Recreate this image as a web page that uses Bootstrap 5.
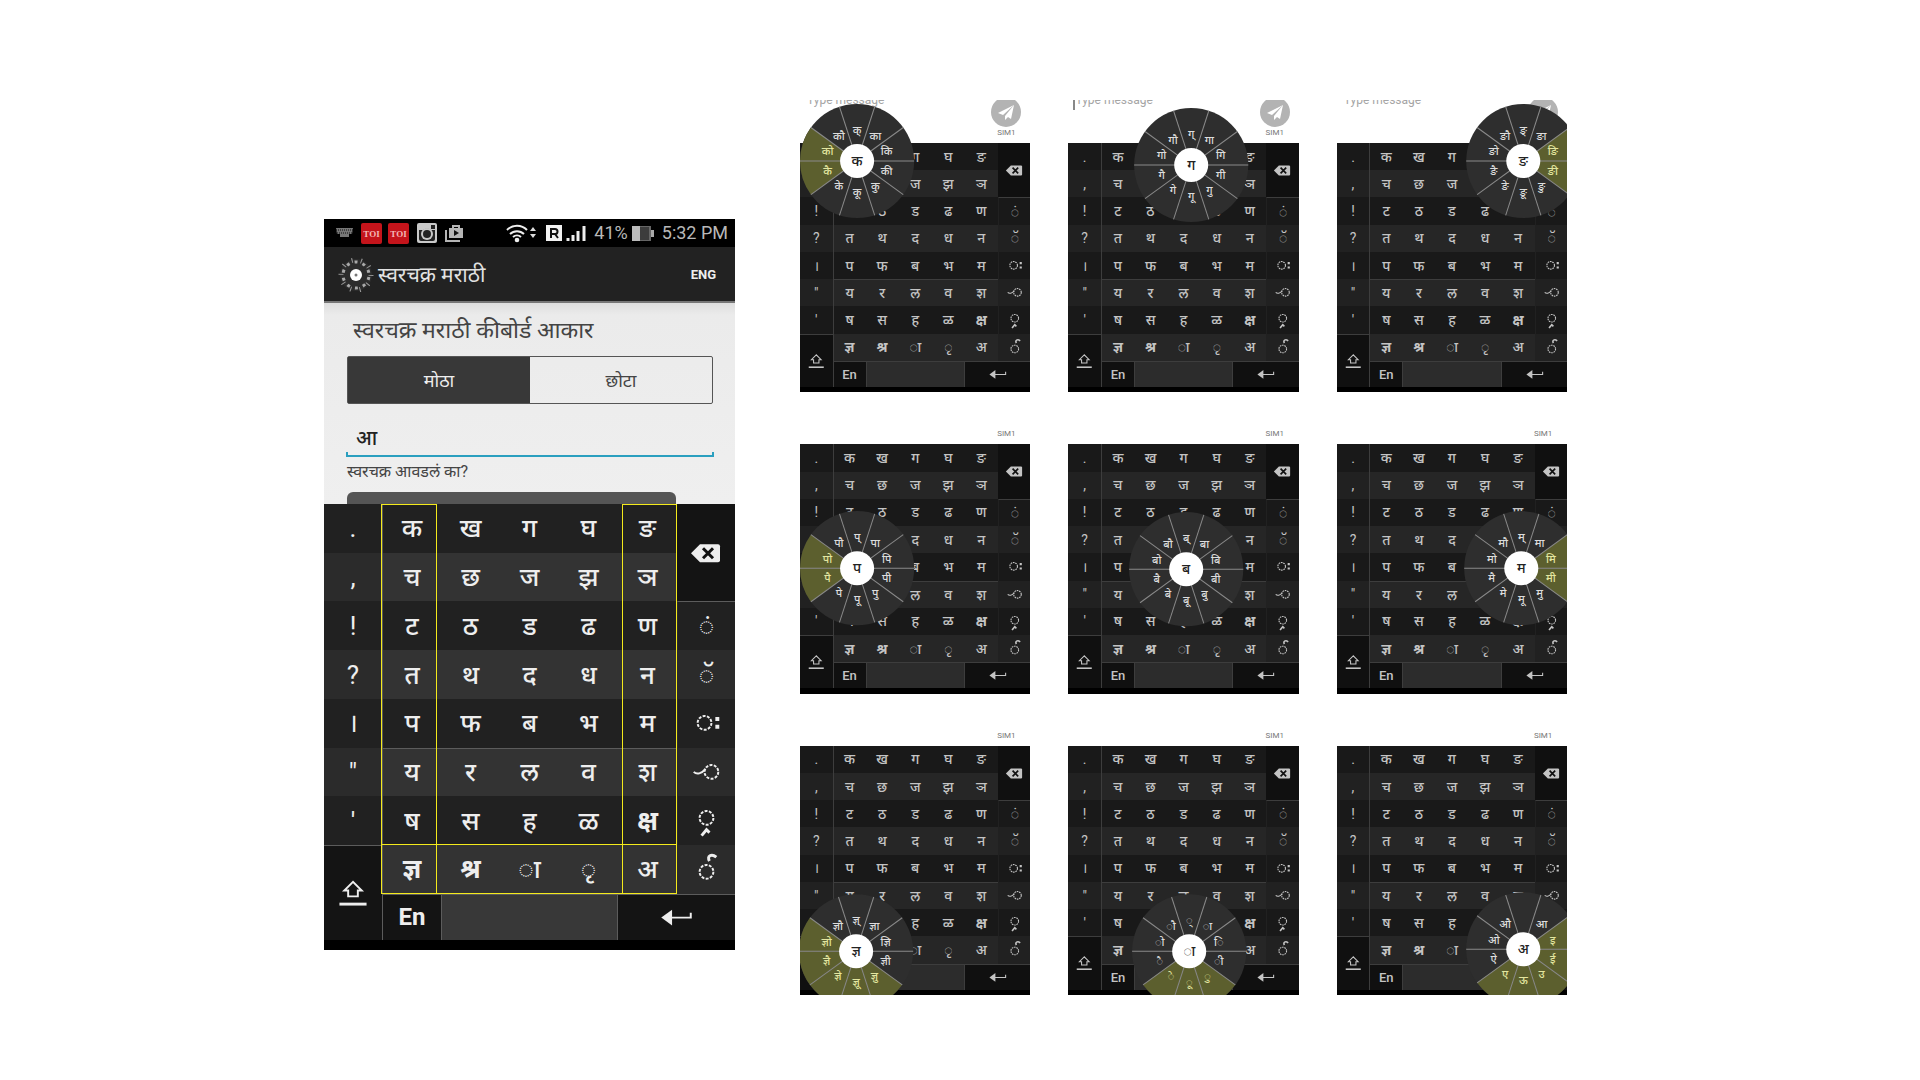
<!DOCTYPE html>
<html lang="mr">
<head>
<meta charset="utf-8">
<meta name="viewport" content="width=device-width, initial-scale=1">
<title>स्वरचक्र मराठी</title>
<link href="https://cdn.jsdelivr.net/npm/bootstrap@5.3.0/dist/css/bootstrap.min.css" rel="stylesheet">
<style>
  body { background: #fff; font-family: Roboto, "Noto Sans", sans-serif; }
  .board { display: grid; grid-template-columns: 411fr 767fr; column-gap: 65px; padding: 100px 18.38% 0 16.875%; align-items: start; }
  .phone { margin-top: 119px; background: #000; }
  .status { height: 28px; padding: 0 7px 0 12px; background: #000; color: #b8b8b8; font-size: 18px; line-height: 28px; }
  .appbar { height: 56px; background: #222; border-bottom: 2px solid #777; padding: 2px 19px 0 14px; color: #e2e2e2; }
  .app-title { font-size: 21px; line-height: 32px; }
  .app-lang { color: #eee; font-size: 13px; font-weight: 700; text-decoration: none; }
  .settings { height: 201px; overflow: hidden; padding: 8px 22px 0 23px; background: linear-gradient(#dedede, #ebebeb 12px, #efefef); }
  .settings h1 { font-size: 23px; line-height: 40px; font-weight: 400; color: #444; margin: 0 0 5px; padding-left: 6px; }
  .sizes { border: 1px solid #555; border-radius: 2px; height: 48px; }
  .sizes .btn { border: 0; border-radius: 0; font-size: 18px; padding: 0; color: #444; }
  .sizes .btn.active { background: #383838; color: #eee; }
  .sample { display: block; width: 100%; margin-top: 17px; height: 32px; border: 0; padding: 0 9px; background: transparent; color: #222; font-size: 20px; font-weight: 500; outline: 0; }
  .sample-line { height: 5px; border: 2px solid #2a9fbf; border-top: 0; margin: -1px -1px 0; }
  .sample-label { display: block; font-size: 16px; line-height: 26px; color: #444; margin: 2px 0 7px; }
  .rate { display: block; width: 90%; height: 30px; border: 0; border-radius: 6px 6px 0 0; background: #555; }

  .keys { position: relative; display: grid; aspect-ratio: 411 / 446; grid-template-columns: 58fr repeat(5, 59fr) 58fr; grid-template-rows: repeat(8, 39fr) 37fr 8fr;
    --dark: #212121; --light: #333; --side: #2b2b2b; --fn: #141414; --space: #383838; --line: #5c5c5c; --ink: #eee; background: #000; font-size: 26px; }
  .keys-sm { aspect-ratio: 230 / 249; --dark: #191919; --light: #262626; --side: #212121; --fn: #101010; --space: #2c2c2c; --line: #3d3d3d; --ink: #c4c4c4; font-size: 14px; }
  .key { display: flex; align-items: center; justify-content: center; min-width: 0; min-height: 0; padding: 0; border: 0; color: var(--ink); background: var(--dark); line-height: 1; font-weight: 500; }
  .key svg { width: 100%; height: 100%; display: block; }
  .key.edge { font-weight: 400; }
  .key.alt { background: var(--light); }
  .key.alt.edge { background: var(--side); }
  .key.fn { background: var(--fn); }
  .key.first { border-left: 1px solid var(--line); }
  .key.last { border-left: 1px solid var(--side); }
  .key.ruled { border-top: 1px solid var(--line); }
  .key.strong { font-weight: 700; }
  .key.space { background: var(--space); border-left: 1px solid var(--line); border-right: 1px solid var(--line); }
  .key.lang { font-weight: 700; font-size: 24px; }
  .keys-sm .key.lang { font-weight: 500; font-size: 13px; }
  .zone { border: 1px solid #f4ea1c; pointer-events: none; }
  .zone-a { grid-area: 1 / 2 / 9 / 3; margin: 0 4px 0 -1px; }
  .zone-b { grid-area: 1 / 6 / 9 / 7; margin-left: 4px; }
  .zone-c { grid-area: 8 / 2 / 9 / 7; margin: -1px 0 0 -1px; }

  .gallery { display: grid; grid-template-columns: repeat(3, 1fr); column-gap: 38px; row-gap: 26px; }
  .shot { overflow: hidden; }
  .shot-head { height: 26px; padding: 6px 9px 0 7px; }
  .shot-head.tall { height: 43px; padding-top: 0; }
  .shot-head input { width: 120px; height: 20px; margin-top: -10px; padding: 0; border: 0; font-size: 12px; line-height: 20px; color: #555; outline: 0; }
  .shot-head input::placeholder { color: #a5a5a5; opacity: 1; }
  .caret input { border-left: 2px solid #888; padding-left: 0; margin-left: -2px; }
  .send { display: block; width: 30px; height: 30px; margin-top: -3px; padding: 0; border: 0; background: none; }
  .send svg { display: block; }
  .sim { font-size: 8px; line-height: 12px; color: #777; width: 30px; text-align: center; }
  .wheel { position: absolute; inset: 0; width: 100%; height: 100%; overflow: visible; pointer-events: none; font-size: 11px; font-weight: 500; text-anchor: middle; fill: #ddd; }
</style>
<script src="https://cdn.jsdelivr.net/npm/bootstrap@5.3.0/dist/js/bootstrap.bundle.min.js"></script>
</head>
<body>
<main class="board">
  <section class="phone">
    <div class="status d-flex align-items-center">
      <svg width="17" height="10" viewBox="0 0 17 10"><path d="M0 0h17l-1 6h-3v3H4V6H1z" fill="#777"/><path d="M0 2h17M1 5h15" stroke="#111" stroke-dasharray="1 1"/></svg>
      <svg class="ms-2" width="48" height="21" viewBox="0 0 48 21"><rect width="21" height="21" rx="2" fill="#c4141b"/><rect x="27" width="21" height="21" rx="2" fill="#c4141b"/><g font-family="Liberation Serif" font-size="9" font-weight="700" fill="#f3b8b8" text-anchor="middle"><text x="10.5" y="14">TOI</text><text x="37.5" y="14">TOI</text></g></svg>
      <svg class="ms-2" width="20" height="20" viewBox="0 0 20 20"><rect width="20" height="20" rx="2" fill="#c9c9c9"/><path d="M2 7h4a6 6 0 0 1 8 0h4v9a2 2 0 0 1-2 2H4a2 2 0 0 1-2-2z" fill="#222"/><circle cx="10" cy="11" r="6" fill="#c9c9c9"/><circle cx="10" cy="11" r="4" fill="#222"/><rect x="14" y="2" width="4" height="4" fill="#222"/></svg>
      <svg class="ms-2" width="19" height="18" viewBox="0 0 19 18"><path d="M1 6v11h14" fill="none" stroke="#b5b5b5" stroke-width="2"/><path d="M8 4V2h6v2" fill="none" stroke="#b5b5b5" stroke-width="2"/><rect x="4" y="4" width="14" height="10" fill="#b5b5b5"/><path d="M9 6v6l5-3z" fill="#111"/></svg>
      <svg class="ms-auto" width="80" height="20" viewBox="0 0 80 20"><g fill="none" stroke="#eee" stroke-width="2"><path d="M1 7a14 14 0 0 1 20 0M4 11a10 10 0 0 1 14 0M7 14a6 6 0 0 1 8 0"/></g><circle cx="11" cy="17" r="2.300" fill="#eee"/><path d="M24 8l3-4 3 4zM24 11l3 4 3-4z" fill="#ddd"/><rect x="40" y="2" width="16" height="16" fill="#f2f2f2"/><path d="M45 15V6h4a2 2 0 0 1 0 5h-4m4 0l3 4" fill="none" stroke="#111" stroke-width="2"/><path d="M62 18v-3M67 18v-6M72 18V8M78 18V3" stroke="#eee" stroke-width="3"/></svg>
      <span class="ms-2">41%</span>
      <svg class="mx-1" width="22" height="15" viewBox="0 0 22 15"><rect width="19" height="15" fill="#666"/><rect x="7" y="1" width="10" height="13" fill="#3c3c3c"/><rect width="8" height="15" fill="#bbb"/><rect x="19" y="4" width="3" height="7" fill="#aaa"/></svg>
      <span class="ms-1">5:32 PM</span>
    </div>
    <header class="appbar d-flex align-items-center">
      <svg width="36" height="36" viewBox="-18 -18 36 36"><circle r="16" fill="#2c2c2c"/><circle r="15" fill="none" stroke="#999" stroke-width="5" stroke-dasharray="1 8.400"/><circle r="13" fill="none" stroke="#aaa" stroke-width="3" stroke-dasharray="3 5.200" stroke-dashoffset="-2"/><circle r="6" fill="#fff"/><circle r="1.500" fill="#777"/></svg>
      <span class="app-title ms-1">स्वरचक्र मराठी</span>
      <a class="app-lang ms-auto" href="#">ENG</a>
    </header>
    <div class="settings">
      <h1>स्वरचक्र मराठी कीबोर्ड आकार</h1>
      <div class="sizes d-flex"><button class="btn active flex-fill w-50">मोठा</button><button class="btn flex-fill w-50">छोटा</button></div>
      <input class="sample" id="sample" value="आ"><div class="sample-line"></div>
      <label class="sample-label" for="sample">स्वरचक्र आवडलं का?</label>
      <button class="rate" aria-label="Rate"></button>
    </div>
    <div class="keys" id="keys-main"></div>
  </section>
  <section class="gallery" id="gallery"></section>
</main>
<script>
  const letters = ['क ख ग घ ङ', 'च छ ज झ ञ', 'ट ठ ड ढ ण', 'त थ द ध न', 'प फ ब भ म', 'य र ल व श', 'ष स ह ळ क्ष', 'ज्ञ श्र ◌ा ◌ृ अ'].map(r => r.split(' '));
  const marks = ['.', ',', '!', '?', '।', '"', "'"];
  const ring = '<circle cx="29" cy="24" r="7" fill="none" stroke="currentColor" stroke-width="2" stroke-dasharray="3 1.400"/>';
  const glyph = body => `<svg viewBox="0 0 58 49" fill="none" stroke="currentColor" stroke-width="2">${body}</svg>`;
  const signs = ['◌ं', '◌ॅ',
    glyph('<g transform="translate(-2 0)">' + ring + '</g><path d="M38 20h4M38 28h4" stroke-width="4"/>'),
    glyph('<path d="M16 24c3 3 8 2 12-3"/><g transform="translate(5 0)">' + ring + '</g>'),
    glyph('<g transform="translate(0 -2)">' + ring + '</g><path d="M24 40l5-6 3 3" stroke-width="3"/>'),
    glyph('<g transform="translate(0 3)">' + ring + '</g><path d="M32 16c-3-5 2-8 7-4" stroke-width="3"/>')];
  const icons = {
    back: '<svg viewBox="0 0 58 97"><path d="M14 49l9-9h18a2 2 0 0 1 2 2v14a2 2 0 0 1-2 2H23z" fill="currentColor"/><path d="M26 44l10 10m0-10l-10 10" stroke="#111" stroke-width="3"/></svg>',
    shift: '<svg viewBox="0 0 58 97" fill="none" stroke="currentColor" stroke-width="3"><path d="M29 37l-9 9h4v6h10v-6h4z" stroke-width="2"/><path d="M15 60h28"/></svg>',
    enter: '<svg viewBox="0 0 117 46"><path d="M43 23l11-8v16z" fill="currentColor"/><path d="M52 23h21v-5" fill="none" stroke="currentColor" stroke-width="2"/></svg>'
  };
  const key = (area, cls, body, label) => `<button class="key ${cls}" style="grid-area:${area}"${label ? ` aria-label="${label}"` : ''}>${body}</button>`;

  function keyboard() {
    let html = '';
    letters.forEach((row, r) => {
      const alt = r % 2 ? ' alt' : '';
      if (r < 7) html += key(`${r + 1}/1/${r + 2}/2`, 'edge' + alt, marks[r]);
      row.forEach((ch, c) => html += key(`${r + 1}/${c + 2}/${r + 2}/${c + 3}`,
        (c ? '' : 'first') + alt + (r === 5 ? ' ruled' : '') + (['क्ष', 'ज्ञ', 'श्र'].includes(ch) ? ' strong' : ''), ch));
      if (r > 1) html += key(`${r + 1}/7/${r + 2}/8`, 'edge last' + alt + (r === 2 ? ' ruled' : ''), signs[r - 2]);
    });
    return html + key('1/7/3/8', 'fn', icons.back, 'Backspace') + key('8/1/10/2', 'fn ruled', icons.shift, 'Shift')
      + key('9/2/10/3', 'fn lang first ruled', 'En') + key('9/3/10/6', 'space ruled', '', 'Space') + key('9/6/10/8', 'fn ruled', icons.enter, 'Enter');
  }

  const at = (radius, deg) => [radius * Math.sin(deg * Math.PI / 180), -radius * Math.cos(deg * Math.PI / 180)].map(v => v.toFixed(1));
  function wheel(w) {
    let fills = '', lines = '', text = '';
    w.items.forEach((label, i) => {
      const [x1, y1] = at(57, i * 36 - 18), [x2, y2] = at(57, i * 36 + 18), [tx, ty] = at(31, i * 36);
      if (w.on.includes(i)) fills += `<path d="M0 0L${x1} ${y1}A57 57 0 0 1 ${x2} ${y2}z" fill="#5c5f2e"/>`;
      lines += `<path d="M0 0L${x1} ${y1}"/>`;
      text += `<text x="${tx}" y="${+ty + 4}"${w.on.includes(i) ? ' fill="#e3e6a0"' : ''}>${label}</text>`;
    });
    return `<svg class="wheel" viewBox="0 0 230 249"><g transform="translate(${w.x} ${w.y})"><circle r="57" fill="#2e2e2e"/>${fills}
      <g stroke="#8a8a8a">${lines}</g>${text}<circle r="17" fill="#fff"/><text y="5" font-size="14" fill="#222">${w.base}</text></g></svg>`;
  }
  const vowels = ['्', 'ा', 'ि', 'ी', 'ु', 'ू', 'े', 'ै', 'ो', 'ौ'];
  const withVowels = base => vowels.map(v => base + v);
  const wheels = [
    { x: 57, y: 18, base: 'क', on: [7, 8] }, { x: 123, y: 22, base: 'ग', on: [] }, { x: 186, y: 18, base: 'ङ', on: [2, 3] },
    { x: 57, y: 124, base: 'प', on: [7, 8] }, { x: 118, y: 125, base: 'ब', on: [] }, { x: 184, y: 124, base: 'म', on: [2, 3] },
    { x: 56, y: 205, base: 'ज्ञ', on: [4, 5, 6, 7, 8] }, { x: 121, y: 205, base: '◌ा', on: [4, 5, 6], items: withVowels('◌') },
    { x: 186, y: 203, base: 'अ', on: [2, 3, 4, 5, 6], items: ['', 'आ', 'इ', 'ई', 'उ', 'ऊ', 'ए', 'ऐ', 'ओ', 'औ'] }
  ];
  const plane = '<svg width="30" height="30" viewBox="0 0 30 30"><circle cx="15" cy="15" r="15" fill="#b3b3b3"/><path d="M23 8L7 16l5 2zM23 8l-9 11v4l3-3 3 2z" fill="#fff"/></svg>';

  document.getElementById('keys-main').innerHTML = keyboard() + '<span class="zone zone-a"></span><span class="zone zone-b"></span><span class="zone zone-c"></span>';
  document.getElementById('gallery').innerHTML = wheels.map((w, i) => {
    const head = i < 3
      ? `<div class="shot-head tall d-flex justify-content-between${i === 1 ? ' caret' : ''}"><input placeholder="Type message" aria-label="Message"><div><button class="send" aria-label="Send">${plane}</button><div class="sim">SIM1</div></div></div>`
      : '<div class="shot-head d-flex justify-content-end align-items-center"><div class="sim">SIM1</div></div>';
    return `<article class="shot">${head}<div class="keys keys-sm">${keyboard()}${wheel({ items: withVowels(w.base), ...w })}</div></article>`;
  }).join('');
</script>
</body>
</html>
